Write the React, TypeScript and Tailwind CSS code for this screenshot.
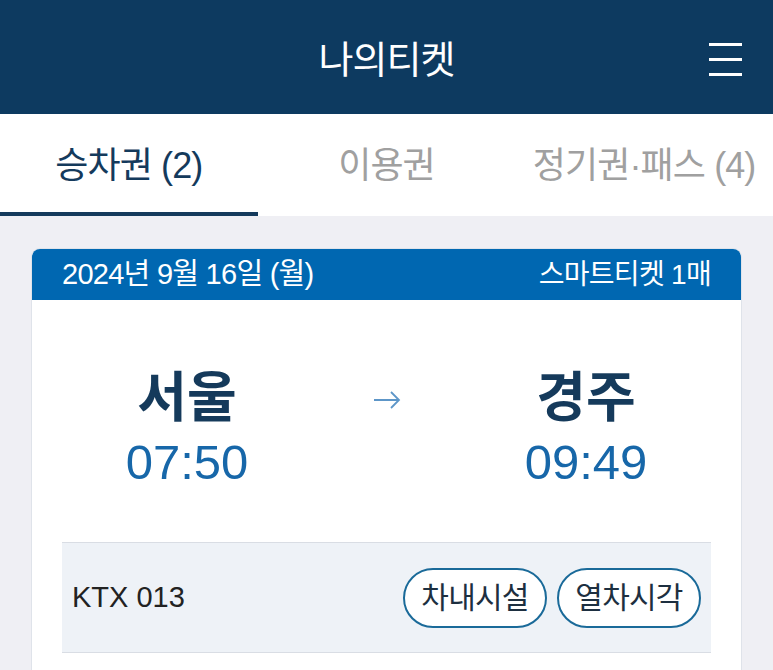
const FONT = '"Liberation Sans", "Noto Sans CJK KR", sans-serif'

const TABS = [
  { label: '승차권 (2)', active: true },
  { label: '이용권', active: false },
  { label: '정기권·패스 (4)', active: false },
]

export default function App() {
  return (
    <div className="min-h-screen bg-[#efeff4]" style={{ fontFamily: FONT }}>
      {/* 헤더 */}
      <div className="relative h-[114px] bg-[#0d3a60] flex items-center justify-center pt-[6px]">
        <h1 className="text-[38px] text-white tracking-tight">나의티켓</h1>
        <button className="absolute right-[31px] top-[43px] flex flex-col gap-[12px]">
          <span className="block w-[33px] h-[3px] bg-white" />
          <span className="block w-[33px] h-[3px] bg-white" />
          <span className="block w-[33px] h-[3px] bg-white" />
        </button>
      </div>

      {/* 탭 */}
      <div className="grid grid-cols-3 bg-white h-[102px]">
        {TABS.map((t) => (
          <div key={t.label} className="relative flex items-center justify-center pt-[2px]">
            <span className={`text-[36px] tracking-tight whitespace-nowrap ${t.active ? 'text-[#143a5c]' : 'text-[#a0a0a0]'}`}>
              {t.label}
            </span>
            {t.active && <span className="absolute left-0 right-0 bottom-0 h-[4px] bg-[#143a5c]" />}
          </div>
        ))}
      </div>

      {/* 티켓 카드 */}
      <div className="px-[31px] pt-[32px]">
        <div className="rounded-t-[9px] overflow-hidden border border-[#dfe3ea] bg-white">
          <div className="h-[51px] bg-[#0067b1] flex items-center justify-between px-[30px] text-white">
            <span className="text-[29px] tracking-tight">2024년 9월 16일 (월)</span>
            <span className="text-[28px] tracking-tight">스마트티켓 1매</span>
          </div>

          <div className="flex items-start justify-between px-[80px] pt-[68px] pb-[51px]">
            <Station name="서울" time="07:50" />
            <div className="pt-[20px] text-[#5d96c8]">
              <svg width="30" height="24" viewBox="0 0 30 24" fill="none" stroke="currentColor" strokeWidth="1.8">
                <path d="M2 12h25M19 4l8 8-8 8" />
              </svg>
            </div>
            <Station name="경주" time="09:49" />
          </div>

          <div className="mx-[30px] h-[111px] bg-[#eef2f7] border-y border-[#d9dde4] flex items-center justify-between pl-[10px] pr-[10px]">
            <span className="text-[29px] text-[#222]">KTX 013</span>
            <div className="flex gap-[10px]">
              <Pill label="차내시설" />
              <Pill label="열차시각" />
            </div>
          </div>
          <div className="h-[40px]" />
        </div>
      </div>
    </div>
  )
}

function Station({ name, time }: { name: string; time: string }) {
  return (
    <div className="flex flex-col items-center w-[150px]">
      <span className="text-[54px] font-bold leading-[60px] text-[#153a5b]">{name}</span>
      <span className="text-[49px] leading-[58px] mt-[5px] text-[#1767a9]">{time}</span>
    </div>
  )
}

function Pill({ label }: { label: string }) {
  return (
    <button className="h-[60px] w-[144px] rounded-full border-2 border-[#1a6a99] bg-white text-[30px] text-[#1d2f40] tracking-tight">
      {label}
    </button>
  )
}
